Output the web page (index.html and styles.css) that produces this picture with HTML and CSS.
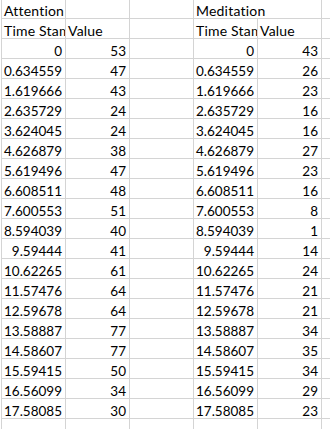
FILE: index.html
```html
<!DOCTYPE html>
<html>
<head>
<meta charset="utf-8">
<link rel="stylesheet" href="styles.css">
</head>
<body>
<div class="sheet">
  <div class="c t">Attention</div><div class="c"></div><div class="c"></div><div class="c t span2">Meditation</div><div class="c"></div>
  <div class="c t">Time Stamp</div><div class="c t">Value</div><div class="c"></div><div class="c t">Time Stamp</div><div class="c t">Value</div><div class="c"></div>
  <div class="c n">0</div><div class="c n">53</div><div class="c"></div><div class="c n">0</div><div class="c n">43</div><div class="c"></div>
  <div class="c n">0.634559</div><div class="c n">47</div><div class="c"></div><div class="c n">0.634559</div><div class="c n">26</div><div class="c"></div>
  <div class="c n">1.619666</div><div class="c n">43</div><div class="c"></div><div class="c n">1.619666</div><div class="c n">23</div><div class="c"></div>
  <div class="c n">2.635729</div><div class="c n">24</div><div class="c"></div><div class="c n">2.635729</div><div class="c n">16</div><div class="c"></div>
  <div class="c n">3.624045</div><div class="c n">24</div><div class="c"></div><div class="c n">3.624045</div><div class="c n">16</div><div class="c"></div>
  <div class="c n">4.626879</div><div class="c n">38</div><div class="c"></div><div class="c n">4.626879</div><div class="c n">27</div><div class="c"></div>
  <div class="c n">5.619496</div><div class="c n">47</div><div class="c"></div><div class="c n">5.619496</div><div class="c n">23</div><div class="c"></div>
  <div class="c n">6.608511</div><div class="c n">48</div><div class="c"></div><div class="c n">6.608511</div><div class="c n">16</div><div class="c"></div>
  <div class="c n">7.600553</div><div class="c n">51</div><div class="c"></div><div class="c n">7.600553</div><div class="c n">8</div><div class="c"></div>
  <div class="c n">8.594039</div><div class="c n">40</div><div class="c"></div><div class="c n">8.594039</div><div class="c n">1</div><div class="c"></div>
  <div class="c n">9.59444</div><div class="c n">41</div><div class="c"></div><div class="c n">9.59444</div><div class="c n">14</div><div class="c"></div>
  <div class="c n">10.62265</div><div class="c n">61</div><div class="c"></div><div class="c n">10.62265</div><div class="c n">24</div><div class="c"></div>
  <div class="c n">11.57476</div><div class="c n">64</div><div class="c"></div><div class="c n">11.57476</div><div class="c n">21</div><div class="c"></div>
  <div class="c n">12.59678</div><div class="c n">64</div><div class="c"></div><div class="c n">12.59678</div><div class="c n">21</div><div class="c"></div>
  <div class="c n">13.58887</div><div class="c n">77</div><div class="c"></div><div class="c n">13.58887</div><div class="c n">34</div><div class="c"></div>
  <div class="c n">14.58607</div><div class="c n">77</div><div class="c"></div><div class="c n">14.58607</div><div class="c n">35</div><div class="c"></div>
  <div class="c n">15.59415</div><div class="c n">50</div><div class="c"></div><div class="c n">15.59415</div><div class="c n">34</div><div class="c"></div>
  <div class="c n">16.56099</div><div class="c n">34</div><div class="c"></div><div class="c n">16.56099</div><div class="c n">29</div><div class="c"></div>
  <div class="c n">17.58085</div><div class="c n">30</div><div class="c"></div><div class="c n">17.58085</div><div class="c n">23</div><div class="c"></div>
  <div class="c"></div><div class="c"></div><div class="c"></div><div class="c"></div><div class="c"></div><div class="c"></div>
</div>
</body>
</html>
```
FILE: styles.css
```css
html, body {
  margin: 0;
  padding: 0;
  background: #fff;
  overflow: hidden;
  width: 330px;
  height: 429px;
}
.sheet {
  display: grid;
  grid-template-columns: repeat(6, 64px);
  grid-auto-rows: 20px;
  margin-top: -1px;
  margin-left: 1px;
  border-left: 1px solid #d4d4d4;
  width: max-content;
  font-family: Lato, "Liberation Sans", sans-serif;
  font-size: 13.5px;
  color: #000;
}
.c {
  box-sizing: border-box;
  border-right: 1px solid #d4d4d4;
  border-bottom: 1px solid #d4d4d4;
  padding: 4px 3px 0 2px;
  line-height: 16px;
  white-space: nowrap;
  overflow: hidden;
}
.t {
  text-align: left;
  font-size: 14px;
  letter-spacing: 0.2px;
  padding-top: 3.5px;
}
.n {
  text-align: right;
}
.span2 {
  grid-column: span 2;
}
```
